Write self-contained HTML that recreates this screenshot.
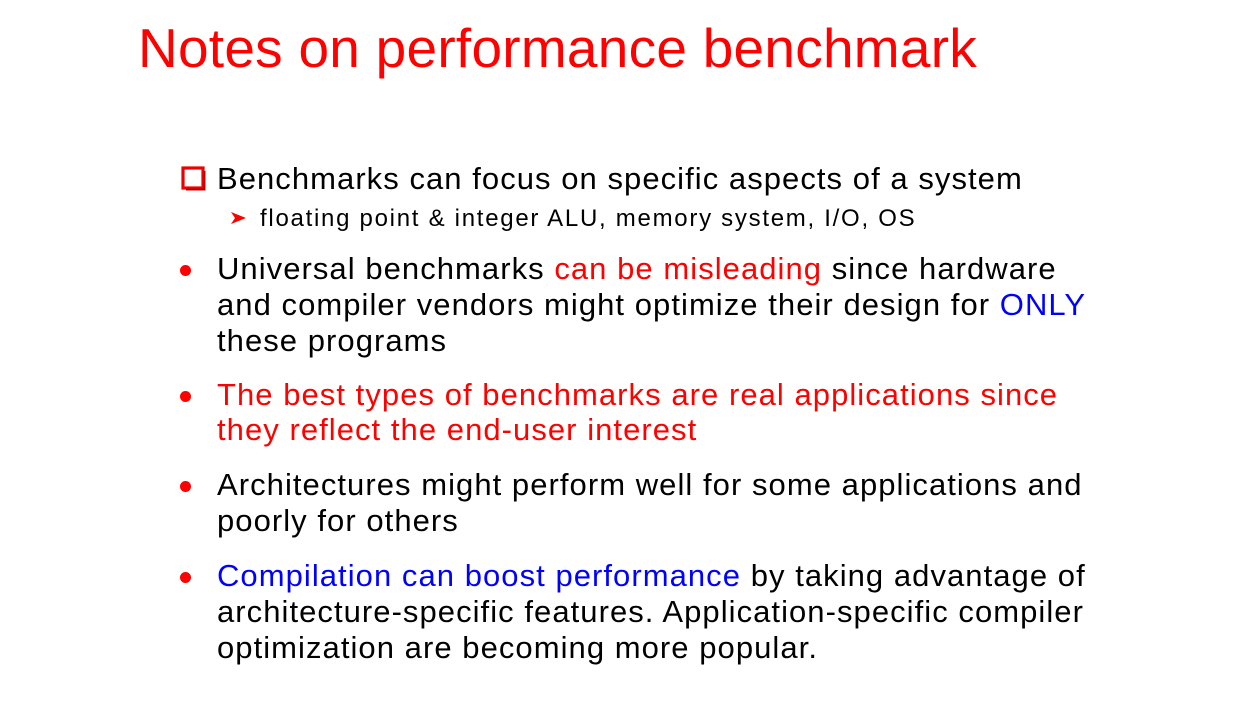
<!DOCTYPE html>
<html><head><meta charset="utf-8"><style>
body{margin:0;width:1254px;height:706px;background:#fff;overflow:hidden;position:relative;font-family:"Liberation Sans",Arial,sans-serif}
.l{position:absolute;white-space:nowrap;line-height:1;color:#000}
.t{font-size:55px;color:#ff0000;left:138px;top:21px;letter-spacing:0.25px}
.b{font-size:31px;left:217px;letter-spacing:1.05px}
.s{font-size:24px;left:260px;letter-spacing:1.72px}
.r{color:#ff0000}.u{color:#0000ff}
.dot{position:absolute;left:180px;width:11px;height:11px;border-radius:50%;background:#ff0000}
</style></head><body>
<div class="l t">Notes on performance benchmark</div>
<svg style="position:absolute;left:181px;top:166px" width="25" height="25"><rect x="2" y="2" width="20" height="20" fill="none" stroke="#e00" stroke-width="3.2"/><path d="M5 23.5H23.5V5" stroke="#b00" stroke-width="2" fill="none"/></svg>
<div class="l b" style="top:163px">Benchmarks can focus on specific aspects of a system</div>
<svg style="position:absolute;left:230px;top:211px" width="17" height="14"><path d="M1 1L16 7L1 13L5 7Z" fill="#f00"/></svg>
<div class="l s" style="top:207px">floating point &amp; integer ALU, memory system, I/O, OS</div>
<div class="dot" style="top:265px"></div>
<div class="l b" style="top:253px">Universal benchmarks <span class="r">can be misleading</span> since hardware</div>
<div class="l b" style="top:289px">and compiler vendors might optimize their design for <span class="u">ONLY</span></div>
<div class="l b" style="top:325px">these programs</div>
<div class="dot" style="top:391px"></div>
<div class="l b r" style="top:379px">The best types of benchmarks are real applications since</div>
<div class="l b r" style="top:414px">they reflect the end-user interest</div>
<div class="dot" style="top:481px"></div>
<div class="l b" style="top:469px">Architectures might perform well for some applications and</div>
<div class="l b" style="top:505px">poorly for others</div>
<div class="dot" style="top:572px"></div>
<div class="l b" style="top:560px"><span class="u">Compilation can boost performance</span> by taking advantage of</div>
<div class="l b" style="top:596px">architecture-specific features. Application-specific compiler</div>
<div class="l b" style="top:632px">optimization are becoming more popular.</div>
</body></html>
